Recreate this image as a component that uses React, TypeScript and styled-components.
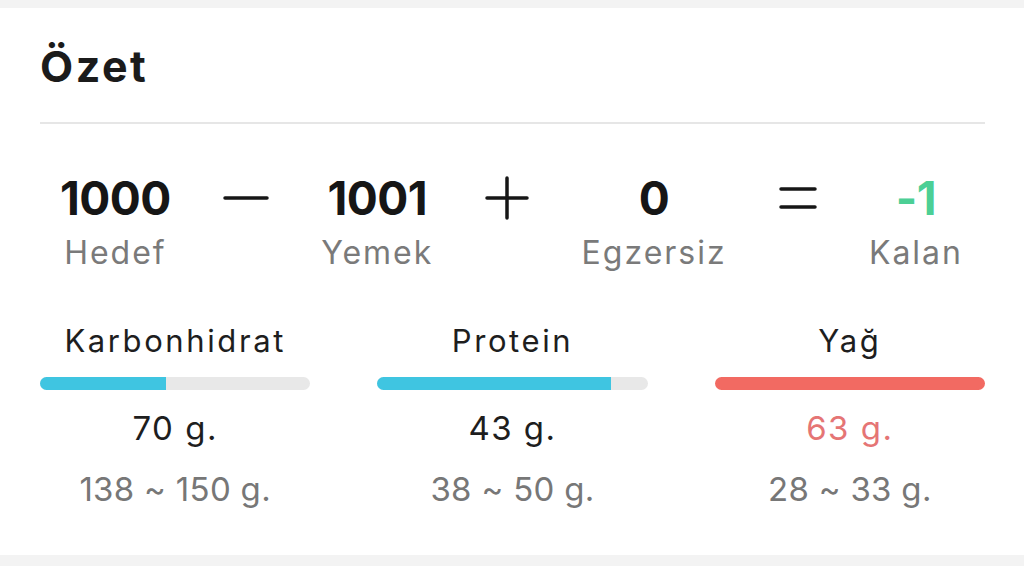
import React from "react";
import styled, { createGlobalStyle } from "styled-components";

const Global = createGlobalStyle`
  html, body { margin: 0; padding: 0; background: #f3f3f3; }
  body { font-family: Inter, "Noto Sans", sans-serif; }
`;

const Page = styled.div`
  width: 1024px;
  height: 566px;
  padding-top: 8px;
  box-sizing: border-box;
  background: #f3f3f3;
`;

const Card = styled.section`
  background: #fff;
  height: 547px;
  padding: 0 39px 0 40px;
  box-sizing: border-box;
  display: flex;
  flex-direction: column;
`;

const Title = styled.h1`
  margin: 0;
  padding-top: 34px;
  height: 80px;
  box-sizing: border-box;
  font-size: 43px;
  font-weight: 700;
  color: #1b1b1b;
  line-height: 48px;
  letter-spacing: 2.5px;
`;

const Divider = styled.hr`
  margin: 34px 0 0;
  border: 0;
  height: 2px;
  background: #e6e6e6;
`;

const StatsRow = styled.div`
  display: flex;
  justify-content: space-between;
  align-items: flex-start;
  padding: 46px 22px 0 20px;
`;

const Stat = styled.div`
  display: flex;
  flex-direction: column;
  align-items: center;
`;

const Num = styled.div<{ $green?: boolean }>`
  font-size: 46px;
  font-weight: 700;
  line-height: 56px;
  letter-spacing: -0.5px;
  color: ${(p) => (p.$green ? "#4ccf95" : "#161616")};
`;

const Label = styled.div`
  margin-top: 7px;
  font-size: 32px;
  font-weight: 400;
  line-height: 40px;
  color: #7a7a7a;
  letter-spacing: 2px;
`;

const Op = styled.div`
  height: 56px;
  display: flex;
  align-items: center;
`;

const Macros = styled.div`
  display: grid;
  grid-template-columns: repeat(3, 1fr);
  column-gap: 67px;
  padding-top: 48px;
`;

const Macro = styled.div`
  display: flex;
  flex-direction: column;
  align-items: center;
`;

const MacroName = styled.div`
  font-size: 31px;
  line-height: 40px;
  color: #1e1e1e;
  letter-spacing: 2.6px;
`;

const Track = styled.div`
  align-self: stretch;
  height: 13px;
  border-radius: 7px;
  background: #e8e8e8;
  overflow: hidden;
  margin-top: 16px;
`;

const Fill = styled.div<{ $red?: boolean }>`
  height: 100%;
  background: ${(p) => (p.$red ? "#f26a62" : "#3fc5e1")};
`;

const Value = styled.div<{ $red?: boolean }>`
  font-size: 33px;
  line-height: 40px;
  margin-top: 18px;
  letter-spacing: 1.5px;
  color: ${(p) => (p.$red ? "#e57575" : "#1e1e1e")};
`;

const Range = styled.div`
  font-size: 33px;
  line-height: 40px;
  margin-top: 21px;
  letter-spacing: 0.3px;
  color: #777;
`;

const Minus = () => (
  <svg width="46" height="46" viewBox="0 0 46 46">
    <line x1="2" y1="23" x2="44" y2="23" stroke="#161616" strokeWidth="3.5" strokeLinecap="round" />
  </svg>
);
const Plus = () => (
  <svg width="44" height="44" viewBox="0 0 44 44">
    <line x1="2" y1="22" x2="42" y2="22" stroke="#161616" strokeWidth="3.5" strokeLinecap="round" />
    <line x1="22" y1="2" x2="22" y2="42" stroke="#161616" strokeWidth="3.5" strokeLinecap="round" />
  </svg>
);
const Equals = () => (
  <svg width="38" height="30" viewBox="0 0 38 30">
    <line x1="2" y1="6" x2="36" y2="6" stroke="#161616" strokeWidth="3.5" strokeLinecap="round" />
    <line x1="2" y1="24" x2="36" y2="24" stroke="#161616" strokeWidth="3.5" strokeLinecap="round" />
  </svg>
);

const macros = [
  { name: "Karbonhidrat", pct: 46.7, value: "70 g.", range: "138 ~ 150 g.", red: false },
  { name: "Protein", pct: 86.3, value: "43 g.", range: "38 ~ 50 g.", red: false },
  { name: "Yağ", pct: 100, value: "63 g.", range: "28 ~ 33 g.", red: true },
];

export default function App() {
  return (
    <>
      <Global />
      <Page>
        <Card>
          <Title>Özet</Title>
          <Divider />
          <StatsRow>
            <Stat>
              <Num>1000</Num>
              <Label>Hedef</Label>
            </Stat>
            <Op><Minus /></Op>
            <Stat>
              <Num>1001</Num>
              <Label>Yemek</Label>
            </Stat>
            <Op><Plus /></Op>
            <Stat>
              <Num>0</Num>
              <Label>Egzersiz</Label>
            </Stat>
            <Op><Equals /></Op>
            <Stat>
              <Num $green>-1</Num>
              <Label>Kalan</Label>
            </Stat>
          </StatsRow>
          <Macros>
            {macros.map((m) => (
              <Macro key={m.name}>
                <MacroName>{m.name}</MacroName>
                <Track>
                  <Fill $red={m.red} style={{ width: `${m.pct}%` }} />
                </Track>
                <Value $red={m.red}>{m.value}</Value>
                <Range>{m.range}</Range>
              </Macro>
            ))}
          </Macros>
        </Card>
      </Page>
    </>
  );
}
